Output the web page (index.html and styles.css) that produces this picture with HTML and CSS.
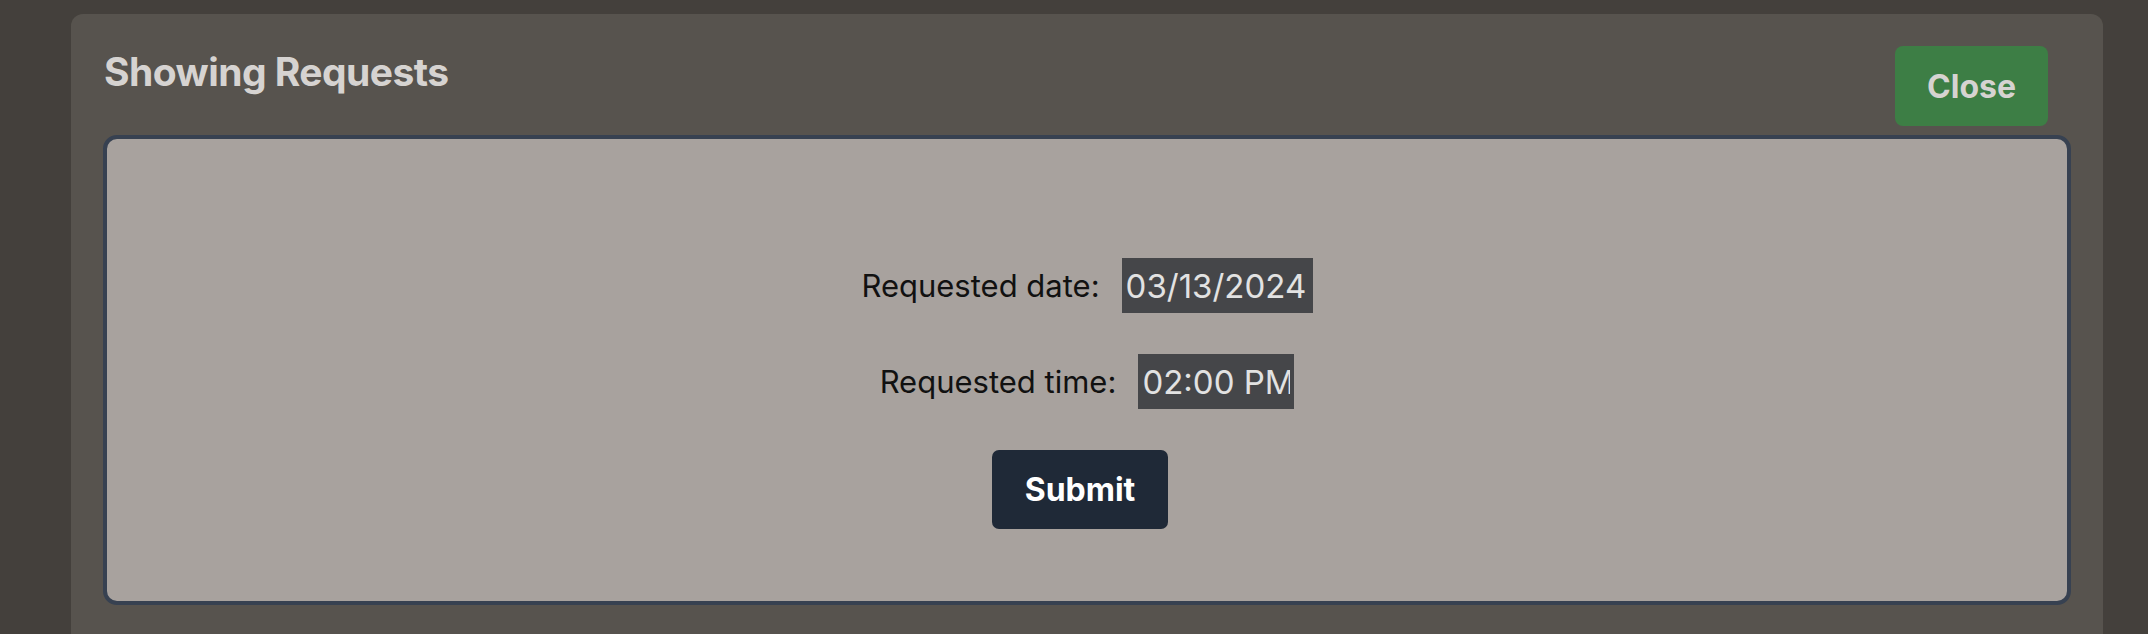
FILE: index.html
```html
<!DOCTYPE html>
<html lang="en">
<head>
<meta charset="utf-8">
<title>Showing Requests</title>
<link rel="stylesheet" href="styles.css">
</head>
<body>
  <div class="modal">
    <div class="modal-header">
      <h2 class="modal-title">Showing Requests</h2>
      <button class="btn-close" type="button">Close</button>
    </div>
    <div class="panel">
      <form class="request-form">
        <div class="form-row">
          <label class="form-label" for="req-date">Requested date:</label>
          <input class="field field-date" id="req-date" type="text" value="03/13/2024" readonly>
        </div>
        <div class="form-row">
          <label class="form-label" for="req-time">Requested time:</label>
          <input class="field field-time" id="req-time" type="text" value="02:00 PM" readonly>
        </div>
        <button class="btn-submit" type="button">Submit</button>
      </form>
    </div>
  </div>
</body>
</html>
```

FILE: styles.css
```css
* {
  box-sizing: border-box;
}

html, body {
  margin: 0;
  padding: 0;
  height: 100%;
}

body {
  background: #44403c;
  font-family: Inter, "Noto Sans", "Liberation Sans", sans-serif;
  overflow: hidden;
}

.modal {
  margin: 14px 0 0 71px;
  width: 2032px;
  min-height: 640px;
  background: #57534e;
  border-radius: 12px;
  padding: 32px 32px 40px 32px;
}

.modal-header {
  display: flex;
  justify-content: space-between;
  align-items: flex-start;
  margin-bottom: 9px;
}

.modal-title {
  margin: 2px 0 0 1px;
  font-size: 39px;
  line-height: 48px;
  font-weight: 700;
  color: #d6d3d1;
  letter-spacing: -0.55px;
}

.btn-close {
  margin-right: 23px;
  height: 80px;
  padding: 0 32px;
  border: none;
  border-radius: 8px;
  background: #3d7e45;
  color: #d6d3d1;
  font-family: inherit;
  font-size: 32px;
  font-weight: 700;
}

.panel {
  height: 470px;
  background: #a8a29e;
  border: 4px solid #374151;
  border-radius: 14px;
  padding-top: 119px;
}

.request-form {
  display: flex;
  flex-direction: column;
  align-items: center;
  gap: 41px;
}

.form-row {
  display: flex;
  align-items: center;
  gap: 22px;
}

.form-label {
  font-size: 31px;
  color: #111111;
}

.field {
  height: 55px;
  padding: 0 4px;
  border: none;
  border-radius: 0;
  background: #454649;
  color: #e2e2e2;
  font-family: inherit;
  font-size: 33px;
  outline: none;
}

.field-date {
  width: 191px;
}

.field-time {
  width: 156px;
}

.btn-submit {
  margin-right: 14px;
  height: 79px;
  padding: 0 33px;
  border: none;
  border-radius: 7px;
  background: #1f2937;
  color: #ffffff;
  font-family: inherit;
  font-size: 32px;
  font-weight: 700;
}
```
